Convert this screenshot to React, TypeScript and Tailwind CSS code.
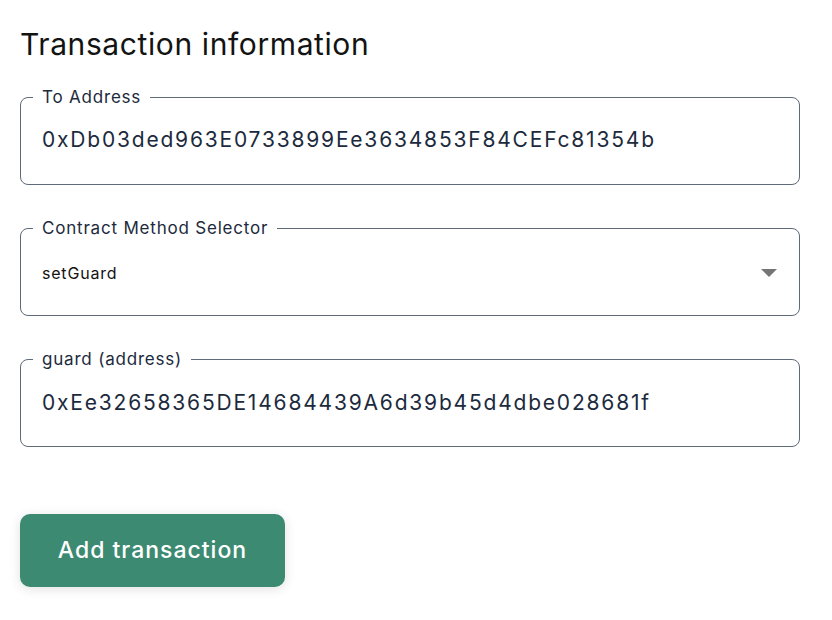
import React from "react";

const font = { fontFamily: "Inter, 'Noto Sans', sans-serif" };

function Field({ label, children }: { label: string; children: React.ReactNode }) {
  return (
    <fieldset className="m-0 min-w-0 rounded-[8px] border border-[#5f6a78] p-0">
      <legend className="ml-[12px] px-[9px] text-[17px] leading-[20px] tracking-[0.8px] text-[#1c2a3d]">{label}</legend>
      {children}
    </fieldset>
  );
}

export default function App() {
  return (
    <div className="h-[620px] w-[832px] bg-white pl-[20px] pr-[32px]" style={font}>
      <h2 className="pt-[26px] text-[30px] leading-[36px] font-normal tracking-[0.6px] text-[#121312]">Transaction information</h2>
      <div className="mt-[25px] flex flex-col gap-[33px]">
        <Field label="To Address">
          <div className="h-[77px] pl-[21px] pt-[18px] text-[21px] leading-[30px] tracking-[1.8px] text-[#1c2a3d]">
            0xDb03ded963E0733899Ee3634853F84CEFc81354b
          </div>
        </Field>
        <Field label="Contract Method Selector">
          <div className="flex h-[77px] items-start justify-between pl-[21px] pr-[22px] pt-[23px] text-[16px] leading-[24px] tracking-[0.8px] text-[#121312]">
            <span>setGuard</span>
            <svg width="16" height="8" viewBox="0 0 16 8" className="mt-[8px]">
              <path d="M0 0 L16 0 L8 8 Z" fill="#757575" />
            </svg>
          </div>
        </Field>
        <Field label="guard (address)">
          <div className="h-[77px] pl-[21px] pt-[19px] text-[21px] leading-[30px] tracking-[1.8px] text-[#1c2a3d]">
            0xEe32658365DE14684439A6d39b45d4dbe028681f
          </div>
        </Field>
      </div>
      <button className="mt-[67px] flex h-[73px] w-[265px] items-center justify-center rounded-[10px] bg-[#3c8a72] text-[23px] font-medium tracking-[1px] text-white shadow-[0_2px_12px_rgba(0,0,0,0.12)]">
        Add transaction
      </button>
    </div>
  );
}
